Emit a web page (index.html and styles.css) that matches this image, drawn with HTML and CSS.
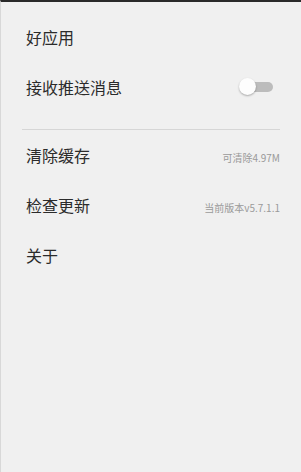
FILE: index.html
```html
<!DOCTYPE html>
<html lang="zh">
<head>
<meta charset="utf-8">
<link rel="stylesheet" href="styles.css">
</head>
<body>
<div class="screen">
  <div class="group">
    <div class="row"><span class="label">好应用</span></div>
    <div class="row"><span class="label">接收推送消息</span>
      <span class="switch"><span class="track"></span><span class="knob"></span></span>
    </div>
  </div>
  <div class="divider"></div>
  <div class="group">
    <div class="row"><span class="label">清除缓存</span><span class="meta">可清除4.97M</span></div>
    <div class="row"><span class="label">检查更新</span><span class="meta">当前版本v5.7.1.1</span></div>
    <div class="row"><span class="label">关于</span></div>
  </div>
</div>
</body>
</html>
```
FILE: styles.css
```css
html, body {
  margin: 0;
  padding: 0;
  background: #f0f0f0;
}
body {
  width: 301px;
  height: 472px;
  font-family: "Noto Sans CJK SC", "Noto Sans", sans-serif;
}
.screen {
  box-sizing: border-box;
  height: 472px;
  border-top: 2px solid #2a2a2a;
  border-left: 1px solid #d8d8d8;
  padding-top: 10px;
}
.row {
  height: 50px;
  display: flex;
  align-items: center;
  justify-content: space-between;
  padding: 0 21px 0 25px;
}
.label {
  font-size: 16px;
  color: #2b2b2b;
  line-height: 1;
}
.meta {
  font-size: 10px;
  color: #9a9a9a;
  line-height: 1;
  margin-top: 5px;
}
.divider {
  height: 1px;
  background: #d6d6d6;
  margin: 17px 21px 0 21px;
}
.switch {
  position: relative;
  width: 34px;
  height: 18px;
  margin-right: 7px;
}
.track {
  position: absolute;
  left: 6px;
  right: 0;
  top: 4px;
  height: 10px;
  border-radius: 5px;
  background: #bcbcbc;
}
.knob {
  position: absolute;
  left: 0;
  top: 0;
  width: 17px;
  height: 17px;
  border-radius: 50%;
  background: #fdfdfd;
  box-shadow: 0 1px 2px rgba(0,0,0,0.3);
}
```
